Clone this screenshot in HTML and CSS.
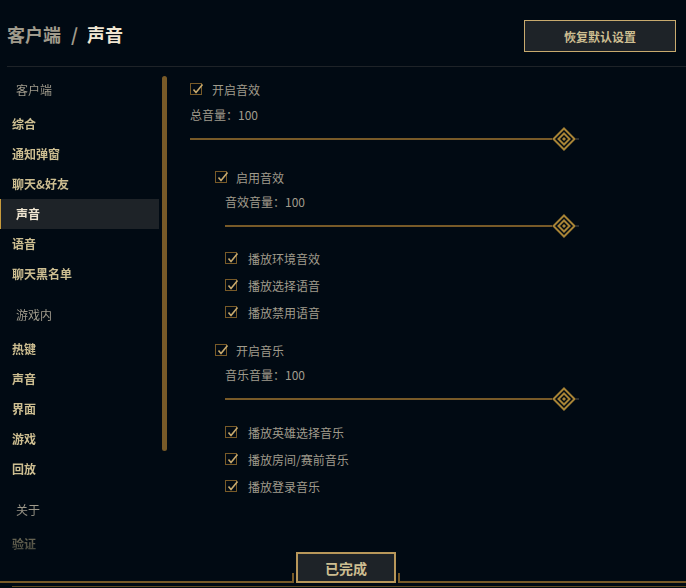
FILE: index.html
```html
<!DOCTYPE html>
<html lang="zh-CN">
<head>
    <meta charset="UTF-8">
    <meta name="viewport" content="width=device-width, initial-scale=1.0">
    <title>声音设置</title>
    <link rel="stylesheet" href="styles.css">
</head>
<body>
<div class="app">

    <header class="top">
        <h1 class="crumb">
            <span class="crumb-parent">客户端</span><span class="crumb-sep">/</span><span class="crumb-current">声音</span>
        </h1>
        <button class="btn-reset">恢复默认设置</button>
    </header>

    <div class="main">
        <nav class="sidebar">
            <div class="group">
                <div class="group-title">客户端</div>
                <a class="nav-item">综合</a>
                <a class="nav-item">通知弹窗</a>
                <a class="nav-item">聊天&amp;好友</a>
                <a class="nav-item active">声音</a>
                <a class="nav-item">语音</a>
                <a class="nav-item">聊天黑名单</a>
            </div>
            <div class="group">
                <div class="group-title">游戏内</div>
                <a class="nav-item">热键</a>
                <a class="nav-item">声音</a>
                <a class="nav-item">界面</a>
                <a class="nav-item">游戏</a>
                <a class="nav-item">回放</a>
            </div>
            <div class="group">
                <div class="group-title">关于</div>
                <a class="nav-item">验证</a>
            </div>
        </nav>

        <div class="scrollbar"></div>

        <section class="settings">
            <label class="check"><span class="box"><svg viewBox="0 0 12 12"><path d="M2.5 5.5 L5 8.5 L11.5 0.5"/></svg></span>开启音效</label>
            <div class="vol">总音量：100</div>
            <div class="slider"><div class="track"></div><svg class="thumb" viewBox="0 0 24 24"><polygon points="12,1.5 22.5,12 12,22.5 1.5,12" class="ring"/><polygon points="12,6.5 17.5,12 12,17.5 6.5,12" class="ring"/><polygon points="12,10 14,12 12,14 10,12" class="dot"/></svg><div class="tail"></div></div>

            <div class="block">
                <label class="check head"><span class="box"><svg viewBox="0 0 12 12"><path d="M2.5 5.5 L5 8.5 L11.5 0.5"/></svg></span>启用音效</label>
                <div class="inner">
                    <div class="vol">音效音量：100</div>
                    <div class="slider"><div class="track"></div><svg class="thumb" viewBox="0 0 24 24"><polygon points="12,1.5 22.5,12 12,22.5 1.5,12" class="ring"/><polygon points="12,6.5 17.5,12 12,17.5 6.5,12" class="ring"/><polygon points="12,10 14,12 12,14 10,12" class="dot"/></svg><div class="tail"></div></div>
                    <div class="list">
                        <label class="check"><span class="box"><svg viewBox="0 0 12 12"><path d="M2.5 5.5 L5 8.5 L11.5 0.5"/></svg></span>播放环境音效</label>
                        <label class="check"><span class="box"><svg viewBox="0 0 12 12"><path d="M2.5 5.5 L5 8.5 L11.5 0.5"/></svg></span>播放选择语音</label>
                        <label class="check"><span class="box"><svg viewBox="0 0 12 12"><path d="M2.5 5.5 L5 8.5 L11.5 0.5"/></svg></span>播放禁用语音</label>
                    </div>
                </div>
            </div>

            <div class="block music">
                <label class="check head"><span class="box"><svg viewBox="0 0 12 12"><path d="M2.5 5.5 L5 8.5 L11.5 0.5"/></svg></span>开启音乐</label>
                <div class="inner">
                    <div class="vol">音乐音量：100</div>
                    <div class="slider"><div class="track"></div><svg class="thumb" viewBox="0 0 24 24"><polygon points="12,1.5 22.5,12 12,22.5 1.5,12" class="ring"/><polygon points="12,6.5 17.5,12 12,17.5 6.5,12" class="ring"/><polygon points="12,10 14,12 12,14 10,12" class="dot"/></svg><div class="tail"></div></div>
                    <div class="list">
                        <label class="check"><span class="box"><svg viewBox="0 0 12 12"><path d="M2.5 5.5 L5 8.5 L11.5 0.5"/></svg></span>播放英雄选择音乐</label>
                        <label class="check"><span class="box"><svg viewBox="0 0 12 12"><path d="M2.5 5.5 L5 8.5 L11.5 0.5"/></svg></span>播放房间/赛前音乐</label>
                        <label class="check"><span class="box"><svg viewBox="0 0 12 12"><path d="M2.5 5.5 L5 8.5 L11.5 0.5"/></svg></span>播放登录音乐</label>
                    </div>
                </div>
            </div>
        </section>
    </div>

    <footer class="footer">
        <div class="rail">
            <div class="seg seg-left"></div>
            <div class="post"></div>
            <button class="btn-done">已完成</button>
            <div class="post"></div>
            <div class="seg seg-right"></div>
        </div>
        <div class="rail-thin"></div>
    </footer>

</div>
</body>
</html>
```

FILE: styles.css
```css
body {
    margin: 0;
    background-color: #010a13;
    font-family: "Noto Sans CJK SC", "Liberation Sans", sans-serif;
    overflow: hidden;
}
.app {
    position: relative;
    height: 588px;
    display: flex;
    flex-direction: column;
}

/* 顶部标题栏 */
.top {
    display: flex;
    justify-content: space-between;
    align-items: flex-start;
    height: 66px;
    margin-left: 7px;
    border-bottom: 1px solid #1e2328;
}
.crumb {
    margin: 22px 0 0 0;
    font-size: 18px;
    line-height: 24px;
    font-weight: bold;
}
.crumb-parent {
    color: #a09b8c;
}
.crumb-sep {
    color: #a09b8c;
    margin: 0 9px 0 10px;
}
.crumb-current {
    color: #f0e6d2;
}
.btn-reset {
    margin: 20px 10px 0 0;
    width: 152px;
    height: 32px;
    background: #1e2328;
    border: 1px solid #c8aa6e;
    color: #cdbe91;
    font-family: inherit;
    font-size: 12px;
    font-weight: bold;
    padding: 0;
}

/* 主体 */
.main {
    display: flex;
    flex: 1;
    min-height: 0;
}
.sidebar {
    width: 159px;
    padding-top: 3px;
    overflow: hidden;
    -webkit-mask-image: linear-gradient(to bottom, #000 440px, transparent 505px);
    mask-image: linear-gradient(to bottom, #000 440px, transparent 505px);
}
.group + .group {
    margin-top: 6px;
}
.group-title {
    padding: 10px 0 9px 16px;
    line-height: 20px;
    font-size: 12px;
    color: #a09b8c;
}
.nav-item {
    display: block;
    height: 30px;
    line-height: 30px;
    padding-left: 12px;
    font-size: 12px;
    font-weight: bold;
    color: #cdbe91;
}
.nav-item.active {
    background: #1e2328;
    border-left: 1px solid #c89b3c;
    padding-left: 15px;
    color: #f0e6d2;
}
.scrollbar {
    width: 5px;
    height: 375px;
    margin: 9px 0 0 3px;
    border-radius: 3px;
    background: #785a28;
}

/* 设置内容 */
.settings {
    width: 389px;
    margin-left: 23px;
    padding-top: 12px;
}
.check {
    display: flex;
    align-items: center;
    height: 20px;
    font-size: 12px;
    color: #a09b8c;
}
.box {
    width: 10px;
    height: 10px;
    border: 1px solid #785a28;
    margin-right: 10px;
    flex-shrink: 0;
}
.box svg {
    display: block;
    width: 12px;
    height: 12px;
    overflow: visible;
}
.box path {
    fill: none;
    stroke: #c8aa6e;
    stroke-width: 1.6;
}
.vol {
    height: 20px;
    line-height: 20px;
    font-size: 12px;
    color: #a09b8c;
    margin-top: 6px;
}
.slider {
    display: flex;
    align-items: center;
    height: 24px;
    margin-top: 2px;
}
.track {
    flex: 1;
    height: 2px;
    background: #785a28;
}
.thumb {
    width: 24px;
    height: 24px;
}
.thumb .ring {
    fill: #010a13;
    stroke: #a88436;
    stroke-width: 2;
}
.thumb .dot {
    fill: #a88436;
}
.tail {
    width: 3px;
    height: 2px;
    background: #2a2d30;
}

.block {
    margin: 16px 0 0 25px;
}
.block.music {
    margin-top: 18px;
}
.inner {
    margin-left: 10px;
}
.inner .vol {
    margin-top: 5px;
}
.list {
    margin-top: 10px;
}
.music .list {
    margin-top: 11px;
}
.list .check + .check {
    margin-top: 7px;
}
.list .box {
    margin-right: 11px;
}
.head .box {
    margin-right: 9px;
}

/* 底部 */
.footer {
    position: absolute;
    left: 0;
    right: 0;
    bottom: 0;
    padding-bottom: 1px;
}
.rail {
    display: flex;
    align-items: flex-end;
    height: 31px;
}
.seg {
    height: 2px;
    background: #785a28;
}
.seg-left {
    width: 292px;
}
.seg-right {
    flex: 1;
}
.post {
    width: 2px;
    height: 10px;
    background: #785a28;
}
.btn-done {
    width: 100px;
    height: 31px;
    margin: 0 2px;
    padding: 0;
    background: #1e2328;
    border: 2px solid #b8975a;
    color: #cdbe91;
    font-family: inherit;
    font-size: 14px;
    font-weight: bold;
}
.rail-thin {
    height: 1px;
    margin: 3px 0 0 12px;
    background: #5e4a24;
}
```
